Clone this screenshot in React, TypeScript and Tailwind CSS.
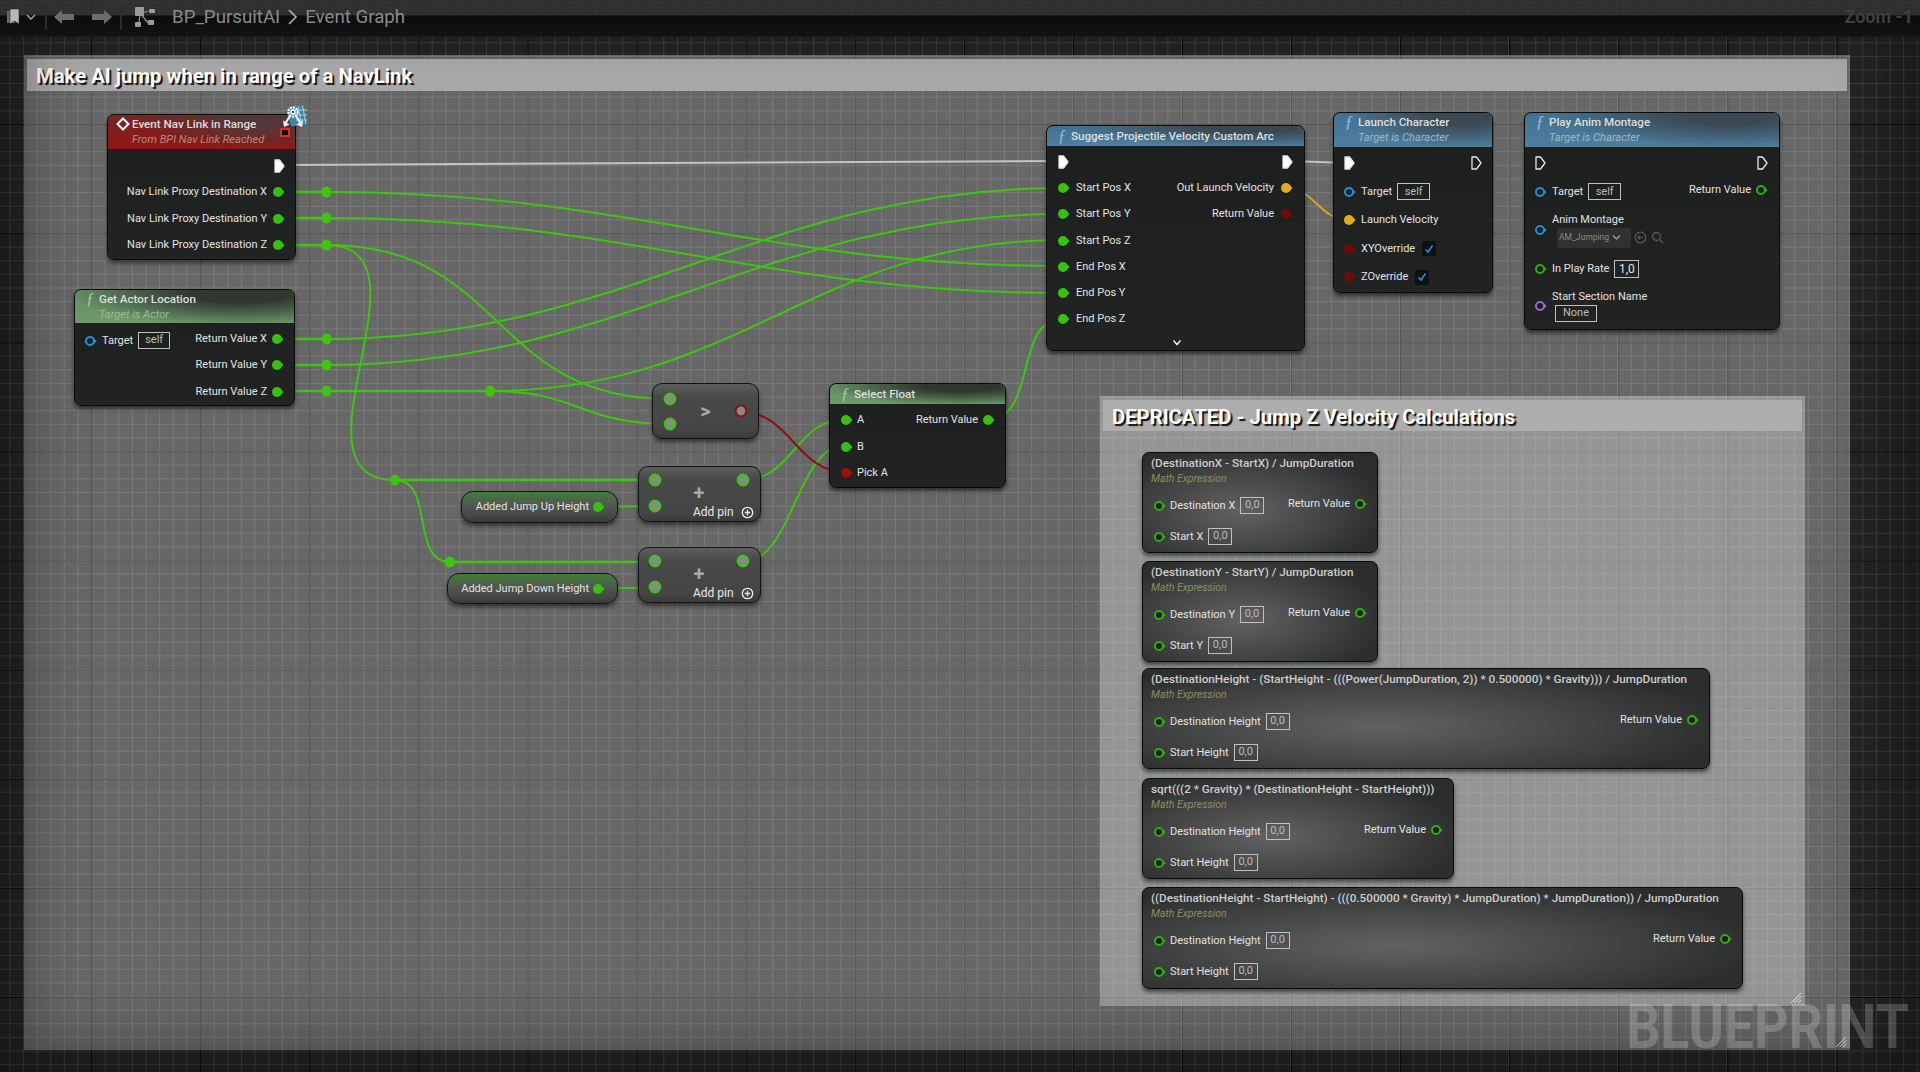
import type { ReactNode } from 'react';

const font = "font-['Roboto','Liberation_Sans',sans-serif]";

const GREEN = '#3fc411';
const wires: { d: [number, number, number, number, number]; c: string; w?: number }[] = [
  { d: [283, 192, 326.5, 192, 0], c: GREEN, w: 2.4 },
  { d: [283, 218, 326.5, 218, 0], c: GREEN, w: 2.4 },
  { d: [283, 245, 326.5, 245, 0], c: GREEN, w: 2.4 },
  { d: [326.5, 192, 1063, 266, 300], c: GREEN },
  { d: [326.5, 218, 1063, 293, 300], c: GREEN },
  { d: [326.5, 245, 669, 399, 180], c: GREEN },
  { d: [326.5, 245, 395, 480, 115], c: GREEN },
  { d: [395, 480, 655, 480, 0], c: GREEN, w: 2.4 },
  { d: [395, 480, 450, 562, 40], c: GREEN },
  { d: [450, 562, 655, 562, 0], c: GREEN, w: 2.4 },
  { d: [283, 339, 326.5, 339, 0], c: GREEN, w: 2.4 },
  { d: [283, 365, 326.5, 365, 0], c: GREEN, w: 2.4 },
  { d: [283, 391, 490, 391, 0], c: GREEN, w: 2.4 },
  { d: [326.5, 339, 1063, 188, 300], c: GREEN },
  { d: [326.5, 365, 1063, 214, 300], c: GREEN },
  { d: [490, 391, 1063, 240, 250], c: GREEN },
  { d: [490, 391, 669, 424, 90], c: GREEN },
  { d: [597, 507, 655, 506, 0], c: GREEN },
  { d: [597, 588, 655, 588, 0], c: GREEN },
  { d: [743, 480, 846, 419, 50], c: GREEN },
  { d: [743, 562, 846, 445, 50], c: GREEN },
  { d: [988, 419, 1063, 319, 50], c: GREEN },
  { d: [741, 412, 846, 472, 50], c: '#8a1212' },
  { d: [1285, 188, 1349, 220, 30], c: '#d9a61c' },
  { d: [285, 165, 1063, 161, 0], c: '#c4c4c4' },
  { d: [1288, 161, 1349, 163, 0], c: '#c4c4c4' },
];

const knots = [
  [326.5, 192], [326.5, 218], [326.5, 245], [326.5, 339], [326.5, 365], [326.5, 391],
  [490, 391], [395, 480], [450, 562],
];

function wirePath([x1, y1, x2, y2, t]: [number, number, number, number, number]) {
  return `M${x1} ${y1}C${x1 + t} ${y1} ${x2 - t} ${y2} ${x2} ${y2}`;
}

function Pin({ color, hollow }: { color: string; hollow?: boolean }) {
  return (
    <svg width="13" height="12" viewBox="0 0 13 12" className="shrink-0">
      <path d="M10 3.6 12.6 6 10 8.4z" fill={color} />
      <circle cx="6" cy="6" r={hollow ? 4 : 5} fill={hollow ? '#1d1f1e' : color} stroke={color} strokeWidth={hollow ? 2 : 0} />
    </svg>
  );
}

function GrayPin({ color }: { color: string }) {
  return (
    <svg width="14" height="14" viewBox="0 0 14 14" className="shrink-0">
      <circle cx="7" cy="7" r="5.4" fill="#8a8a8a" stroke={color} strokeWidth="2" />
    </svg>
  );
}

function ExecPin({ hollow }: { hollow?: boolean }) {
  return (
    <svg width="11" height="14" viewBox="0 0 11 14" className="shrink-0">
      <path
        d="M1 1h4.5L10 7l-4.5 6H1z"
        fill={hollow ? 'none' : '#fff'}
        stroke="#e8e8e8"
        strokeWidth="1.3"
        strokeLinejoin="round"
      />
    </svg>
  );
}

function Fn({ color }: { color: string }) {
  return (
    <span className={`w-[14px] text-center font-['Liberation_Serif',serif] text-[16px] italic leading-[14px] ${color}`}>ƒ</span>
  );
}

function Box({ children, className = '' }: { children: ReactNode; className?: string }) {
  return (
    <span className={`flex h-[17px] items-center justify-center border border-[#c0c0c0] text-[11px] text-[#bcbcbc] ${className}`}>
      {children}
    </span>
  );
}

function Check() {
  return (
    <span className="ml-[2px] flex h-[15px] w-[14px] items-center justify-center rounded-[2px] bg-[#0e0f0f]">
      <svg width="10" height="10" viewBox="0 0 10 10">
        <path d="M1.5 5.5 4 8 8.5 1.5" fill="none" stroke="#2a8cff" strokeWidth="1.5" />
      </svg>
    </span>
  );
}

function Label({ children, className = '' }: { children: ReactNode; className?: string }) {
  return <span className={`whitespace-nowrap text-[11px] leading-[14px] text-[#e2e2e2] ${className}`}>{children}</span>;
}

function NodeBox({ className, children }: { className: string; children: ReactNode }) {
  return (
    <div className={`absolute flex flex-col overflow-hidden rounded-[7px] border border-[#0b0b0b] shadow-[0_3px_4px_rgba(0,0,0,0.55)] ${className}`}>
      {children}
    </div>
  );
}

function Header({ title, sub, icon, bg, h, subColor }: { title: string; sub?: string; icon: ReactNode; bg: string; h: string; subColor?: string }) {
  return (
    <div className={`flex shrink-0 flex-col ${sub ? 'pt-[2px]' : 'pt-[3px]'} ${bg} ${h}`}>
      <div className="flex items-center gap-[2px] pl-[8px]">
        {icon}
        <span className="whitespace-nowrap text-[11.6px] font-medium leading-[14px] text-[#dedede]">{title}</span>
      </div>
      {sub && <span className={`mt-[2px] pl-[24px] text-[11.1px] italic leading-[14px] ${subColor}`}>{sub}</span>}
    </div>
  );
}

const greenHead = "bg-[radial-gradient(ellipse_110%_140%_at_75%_10%,#2f382f_20%,transparent_70%),linear-gradient(#668c66,#6d9a6d)]";
const blueHead = "bg-[radial-gradient(ellipse_90%_130%_at_80%_5%,#3a4853_20%,transparent_75%),linear-gradient(#44708f,#4d7f9f)]";
const redHead = "bg-[radial-gradient(ellipse_90%_130%_at_85%_5%,#503838_20%,transparent_75%),linear-gradient(#7a2424,#8f1515)]";
const dark = "bg-[linear-gradient(#1d1f1e,#222423)]";

function MathNode({ className, title, a, b }: { className: string; title: string; a: string; b: string }) {
  return (
    <NodeBox className={`left-[1142px] bg-[radial-gradient(ellipse_65%_70%_at_42%_58%,#626262,#2c2e2d_95%)] ${className}`}>
      <div className="flex h-[37px] shrink-0 flex-col pl-[8px] pt-[3px]">
        <span className="whitespace-nowrap text-[11.72px] font-medium leading-[14px] text-[#cdcdcd]">{title}</span>
        <span className="mt-[2px] text-[10.5px] italic leading-[14px] text-[#8d8d66]">Math Expression</span>
      </div>
      <div className="flex justify-between">
        <div className="flex flex-col pl-[10px]">
          <div className="flex h-[31px] items-center gap-[4px]">
            <Pin color="#2fae0c" hollow />
            <Label>{a}</Label>
            <Box className="ml-[1px] w-[24px] border-[#a8a8a8]">0,0</Box>
          </div>
          <div className="flex h-[31px] items-center gap-[4px]">
            <Pin color="#2fae0c" hollow />
            <Label>{b}</Label>
            <Box className="ml-[1px] w-[24px] border-[#a8a8a8]">0,0</Box>
          </div>
        </div>
        <div className="flex h-[27px] items-center gap-[4px] pr-[10px]">
          <Label>Return Value</Label>
          <Pin color="#2fae0c" hollow />
        </div>
      </div>
    </NodeBox>
  );
}

function PureNode({ className, children }: { className: string; children: ReactNode }) {
  return (
    <div className={`absolute rounded-[10px] border border-[#141414] bg-[linear-gradient(#5e5e5e,#494949_22%,#454545_85%,#3a3a3a)] shadow-[0_3px_4px_rgba(0,0,0,0.5)] ${className}`}>
      {children}
    </div>
  );
}

function VarNode({ className, label }: { className: string; label: string }) {
  return (
    <div className={`absolute flex items-center justify-end gap-[3px] rounded-[12px] border border-[#141414] bg-[linear-gradient(#3f7f35,#525a50_38%,#454745_80%,#383838)] pr-[12px] shadow-[0_3px_4px_rgba(0,0,0,0.5)] ${className}`}>
      <Label className="text-[10.5px]">{label}</Label>
      <Pin color="#35c10e" />
    </div>
  );
}

function Grip() {
  return (
    <svg width="12" height="12" viewBox="0 0 12 12" className="absolute bottom-[2px] right-[3px]">
      <path d="M1 11 11 1M4.5 11 11 4.5M8 11l3-3" stroke="#e4e4e4" strokeWidth="1" />
    </svg>
  );
}

function TopBar() {
  return (
    <div className="absolute inset-x-0 top-0 flex h-[37px] items-center bg-[linear-gradient(rgba(55,55,55,0.75)_0,rgba(55,55,55,0.75)_15px,#0c0c0c_16px,#121212_35px,rgba(18,18,18,0.5)_37px)] pb-[3px]">
      <svg width="20" height="18" viewBox="0 0 20 18" className="ml-[6px]">
        <path d="M1 3h8v12H1z" fill="#6a6a6a" />
        <path d="M4 1h9v15l-4.5-3L4 16z" fill="#b8b8b8" stroke="#2a2a2a" strokeWidth="0.6" />
      </svg>
      <svg width="12" height="10" viewBox="0 0 12 10" className="ml-[-1px]">
        <path d="M2 3l4 4 4-4" fill="none" stroke="#a8a8a8" strokeWidth="1.4" />
      </svg>
      <span className="ml-[8px] h-[26px] w-[2px] bg-[#2c2c2c]" />
      <svg width="20" height="16" viewBox="0 0 20 16" className="ml-[7px]">
        <path d="M0 8l8-7v4h12v6H8v4z" fill="#6c6c6c" />
      </svg>
      <svg width="20" height="16" viewBox="0 0 20 16" className="ml-[18px]">
        <path d="M20 8l-8-7v4H0v6h12v4z" fill="#6c6c6c" />
      </svg>
      <span className="ml-[8px] h-[26px] w-[2px] bg-[#2c2c2c]" />
      <svg width="24" height="22" viewBox="0 0 24 22" className="ml-[12px]">
        <path d="M7 7l7-2M7 8l7 9M6 8l-1 9" stroke="#8e8e8e" strokeWidth="1.3" fill="none" />
        <rect x="1" y="1" width="9" height="9" rx="1" fill="#9c9c9c" />
        <rect x="15" y="3" width="6" height="4" rx="1" fill="#9c9c9c" />
        <rect x="14" y="14" width="6" height="5" rx="1" fill="#9c9c9c" />
        <rect x="1" y="16" width="6" height="5" rx="1" fill="#9c9c9c" />
      </svg>
      <span className="ml-[14px] text-[18.7px] leading-none text-[#8a8a8a]">BP_PursuitAI</span>
      <svg width="12" height="18" viewBox="0 0 12 18" className="ml-[6px]">
        <path d="M3 2l7 7-7 7" fill="none" stroke="#b0b0b0" strokeWidth="1.6" />
      </svg>
      <span className="ml-[7px] text-[18.7px] leading-none text-[#8a8a8a]">Event Graph</span>
      <span className="ml-auto mr-[7px] text-[18px] font-bold leading-none text-[#3f3f3f]">Zoom -1</span>
    </div>
  );
}

export default function App() {
  return (
    <div className={`relative h-[1072px] w-[1920px] overflow-hidden bg-[#242424] ${font}`}>
      {/* grid */}
      <div className="absolute inset-0 blur-[0.4px] [background-image:linear-gradient(90deg,#0a0a0a_1px,transparent_1px),linear-gradient(#0a0a0a_1px,transparent_1px),linear-gradient(90deg,#3f3f3f_1px,transparent_1px),linear-gradient(#3f3f3f_1px,transparent_1px)] [background-size:109.1px_109.1px,109.1px_109.1px,13.64px_13.64px,13.64px_13.64px] [background-position:91px_15px,91px_15px,9.3px_1.4px,9.3px_1.4px]" />

      {/* big comment */}
      <div className="absolute left-[24px] top-[55px] h-[995px] w-[1826px] bg-white/[0.31]">
        <div className="mx-[3px] mt-[4px] flex h-[32px] items-center bg-[#aaaaaa] pl-[9px] pt-[3px] text-[20.3px] font-bold text-white [text-shadow:2px_2px_1px_#111]">
          Make AI jump when in range of a NavLink
        </div>
        <Grip />
      </div>

      {/* depricated comment */}
      <div className="absolute left-[1100px] top-[396px] h-[610px] w-[705px] bg-white/[0.3]">
        <div className="mx-[3px] mt-[4px] flex h-[31px] items-center bg-[#adadad] pl-[9px] pt-[3px] text-[20.3px] font-bold text-white [text-shadow:2px_2px_1px_#111]">
          DEPRICATED - Jump Z Velocity Calculations
        </div>
        <Grip />
      </div>

      {/* canvas vignette */}
      <div className="absolute inset-0 shadow-[inset_0_0_70px_14px_rgba(0,0,0,0.42)]" />
      <TopBar />

      <svg width="1920" height="1072" className="absolute left-0 top-0">
        {wires.map((w, i) => (
          <path key={i} d={wirePath(w.d)} fill="none" stroke={w.c} strokeWidth={w.w ?? 2} />
        ))}
        {knots.map(([x, y]) => (
          <ellipse key={`${x}-${y}`} cx={x} cy={y} rx="5" ry="5.5" fill="#3fc411" />
        ))}
      </svg>

      {/* Event Nav Link in Range */}
      <NodeBox className={`left-[107px] top-[114px] h-[146px] w-[189px] ${dark}`}>
        <Header
          title="Event Nav Link in Range"
          sub="From BPI Nav Link Reached"
          bg={redHead}
          h="h-[34px]"
          subColor="text-[#b08f78]"
          icon={
            <svg width="14" height="14" viewBox="0 0 14 14">
              <path d="M7 1.5 12.5 7 7 12.5 1.5 7z" fill="none" stroke="#fff" strokeWidth="2" />
            </svg>
          }
        />
        <div className="flex flex-col items-end pr-[10px] pt-[4px]">
          <div className="flex h-[26.3px] items-center"><ExecPin /></div>
          {['X', 'Y', 'Z'].map(a => (
            <div key={a} className="flex h-[26.3px] items-center gap-[5px]">
              <Label>Nav Link Proxy Destination {a}</Label>
              <Pin color="#35c10e" />
            </div>
          ))}
        </div>
      </NodeBox>
      <svg width="26" height="24" viewBox="0 0 26 24" className="absolute left-[282px] top-[104px]">
        <path d="M4 4 21 1l4 19-7 2H9z" fill="#3c86aa" />
        <path d="M16 2.5 20 21M20.5 1.5 24 20M11 6l14 0M12 11h13M14 16h11" stroke="#a9dcea" strokeWidth="0.9" />
        <circle cx="11" cy="8" r="4.6" fill="none" stroke="#fff" strokeWidth="2.2" strokeDasharray="2 1" />
        <circle cx="11" cy="8" r="2.8" fill="#fff" />
        <circle cx="11" cy="8" r="1.3" fill="#2c5f78" />
        <path d="M8 12 3.5 19M14 12l4.5 7" stroke="#f2f2f2" strokeWidth="2.2" fill="none" />
        <path d="M1 16.5 2 23l5.5-2.5zM21 16.5 20 23l-5.5-2.5z" fill="#f2f2f2" />
      </svg>
      <span className="absolute left-[280px] top-[128px] h-[9px] w-[10px] border-2 border-[#e12a2a] bg-black" />

      {/* Get Actor Location */}
      <NodeBox className={`left-[74px] top-[289px] h-[117px] w-[221px] ${dark}`}>
        <Header
          title="Get Actor Location"
          sub="Target is Actor"
          bg={greenHead}
          h="h-[33px]"
          subColor="text-[#9db88f]"
          icon={<Fn color="text-[#9fd08f]" />}
        />
        <div className="flex justify-between">
          <div className="flex h-[26px] items-center gap-[5px] pl-[9px] pt-[9px]">
            <Pin color="#1f8fd8" hollow />
            <Label>Target</Label>
            <Box className="w-[32px]">self</Box>
          </div>
          <div className="flex flex-col items-end pr-[10px] pt-[3px]">
            {['X', 'Y', 'Z'].map(a => (
              <div key={a} className="flex h-[26.3px] items-center gap-[4px]">
                <Label>Return Value {a}</Label>
                <Pin color="#35c10e" />
              </div>
            ))}
          </div>
        </div>
      </NodeBox>

      {/* Suggest Projectile Velocity Custom Arc */}
      <NodeBox className={`left-[1046px] top-[125px] h-[226px] w-[259px] ${dark}`}>
        <Header title="Suggest Projectile Velocity Custom Arc" bg={blueHead} h="h-[20px]" icon={<Fn color="text-[#8fc4e6]" />} />
        <div className="flex justify-between pl-[10px] pr-[11px] pt-[3px]">
          <div className="flex flex-col">
            <div className="flex h-[26.2px] items-center pl-[1px]"><ExecPin /></div>
            {['Start Pos X', 'Start Pos Y', 'Start Pos Z', 'End Pos X', 'End Pos Y', 'End Pos Z'].map(l => (
              <div key={l} className="flex h-[26.2px] items-center gap-[6px]">
                <Pin color="#35c10e" />
                <Label>{l}</Label>
              </div>
            ))}
          </div>
          <div className="flex flex-col items-end">
            <div className="flex h-[26.2px] items-center"><ExecPin /></div>
            <div className="flex h-[26.2px] items-center gap-[6px]">
              <Label>Out Launch Velocity</Label>
              <Pin color="#e8aa1a" />
            </div>
            <div className="flex h-[26.2px] items-center gap-[6px]">
              <Label>Return Value</Label>
              <Pin color="#6e0b0b" />
            </div>
          </div>
        </div>
        <svg width="10" height="8" viewBox="0 0 10 8" className="ml-[125px] mt-[7px]">
          <path d="M1.5 1.5 5 5.5l3.5-4" fill="none" stroke="#e8e8e8" strokeWidth="1.6" />
        </svg>
      </NodeBox>

      {/* Launch Character */}
      <NodeBox className={`left-[1333px] top-[112px] h-[181px] w-[160px] ${dark}`}>
        <Header title="Launch Character" sub="Target is Character" bg={blueHead} h="h-[34px]" subColor="text-[#9db6c6]" icon={<Fn color="text-[#8fc4e6]" />} />
        <div className="flex flex-col pl-[9px] pr-[10px] pt-[2px]">
          <div className="flex h-[28.5px] items-center justify-between pl-[1px]"><ExecPin /><ExecPin hollow /></div>
          <div className="flex h-[28.5px] items-center gap-[5px]">
            <Pin color="#1f8fd8" hollow />
            <Label>Target</Label>
            <Box className="w-[33px]">self</Box>
          </div>
          <div className="flex h-[28.5px] items-center gap-[5px]">
            <Pin color="#e8aa1a" />
            <Label>Launch Velocity</Label>
          </div>
          <div className="flex h-[28.5px] items-center gap-[5px]">
            <Pin color="#6e0b0b" />
            <Label>XYOverride</Label>
            <Check />
          </div>
          <div className="flex h-[28.5px] items-center gap-[5px]">
            <Pin color="#6e0b0b" />
            <Label>ZOverride</Label>
            <Check />
          </div>
        </div>
      </NodeBox>

      {/* Play Anim Montage */}
      <NodeBox className={`left-[1524px] top-[112px] h-[218px] w-[256px] ${dark}`}>
        <Header title="Play Anim Montage" sub="Target is Character" bg={blueHead} h="h-[34px]" subColor="text-[#9db6c6]" icon={<Fn color="text-[#8fc4e6]" />} />
        <div className="flex flex-col pl-[9px] pr-[11px] pt-[2px]">
          <div className="flex h-[28.5px] items-center justify-between pl-[1px]"><ExecPin hollow /><ExecPin hollow /></div>
          <div className="flex h-[28.5px] items-center justify-between">
            <div className="flex items-center gap-[5px]">
              <Pin color="#1f8fd8" hollow />
              <Label>Target</Label>
              <Box className="w-[33px]">self</Box>
            </div>
            <div className="flex items-center gap-[4px] pb-[4px]">
              <Label>Return Value</Label>
              <Pin color="#2fae0c" hollow />
            </div>
          </div>
          <div className="flex h-[48px] items-center gap-[5px]">
            <Pin color="#1f8fd8" hollow />
            <div className="flex flex-col">
              <Label>Anim Montage</Label>
              <div className="flex items-center">
                <div className="ml-[5px] mt-[1px] flex h-[20px] w-[74px] items-center gap-[3px] rounded-[2px] bg-[#303231] pl-[2px]">
                  <span className="text-[8.5px] text-[#8a8a8a]">AM_Jumping</span>
                  <svg width="9" height="7" viewBox="0 0 9 7"><path d="M1 1.5 4.5 5 8 1.5" fill="none" stroke="#a8a8a8" strokeWidth="1.2" /></svg>
                </div>
                <svg width="13" height="13" viewBox="0 0 13 13" className="ml-[3px]">
                  <circle cx="6.5" cy="6.5" r="5.3" fill="none" stroke="#555" strokeWidth="1.2" />
                  <path d="M9 6.5H4.5M6 4.5l-2 2 2 2" fill="none" stroke="#555" strokeWidth="1.1" />
                </svg>
                <svg width="13" height="13" viewBox="0 0 13 13" className="ml-[4px]">
                  <circle cx="5.5" cy="5.5" r="4" fill="none" stroke="#555" strokeWidth="1.3" />
                  <path d="M8.5 8.5 12 12" stroke="#555" strokeWidth="1.4" />
                </svg>
              </div>
            </div>
          </div>
          <div className="flex h-[30px] items-center gap-[5px]">
            <Pin color="#2fae0c" hollow />
            <Label>In Play Rate</Label>
            <Box className="h-[18px] w-[25px] text-[12px] text-[#e4e4e4]">1,0</Box>
          </div>
          <div className="flex h-[44px] items-center gap-[5px]">
            <Pin color="#a560d8" hollow />
            <div className="flex flex-col pb-[1px]">
              <Label>Start Section Name</Label>
              <Box className="ml-[3px] mt-[1px] w-[42px]">None</Box>
            </div>
          </div>
        </div>
      </NodeBox>

      {/* compare */}
      <PureNode className="left-[652px] top-[383px] flex h-[56px] w-[107px] items-center justify-between pl-[10px] pr-[10px]">
        <div className="flex flex-col gap-[11px]">
          <GrayPin color="#39c411" />
          <GrayPin color="#39c411" />
        </div>
        <span className="text-[20px] font-bold leading-none text-[#a8a8a8]">&gt;</span>
        <GrayPin color="#8a1212" />
      </PureNode>

      {/* add nodes */}
      {['top-[466px]', 'top-[547px]'].map(t => (
        <PureNode key={t} className={`left-[638px] h-[56px] w-[123px] ${t}`}>
          <div className="flex pl-[9px] pt-[6px]">
            <div className="flex flex-col gap-[12px]">
              <GrayPin color="#39c411" />
              <GrayPin color="#39c411" />
            </div>
            <div className="flex flex-1 flex-col items-start">
              <div className="self-end pr-[10px]"><GrayPin color="#39c411" /></div>
              <span className="ml-[31px] mt-[-1px] w-[12px] text-center text-[20px] font-bold leading-[14px] text-[#a8a8a8]">+</span>
              <div className="ml-[31px] mt-[5px] flex items-center gap-[7px] whitespace-nowrap">
                <span className="text-[12px] leading-[14px] text-[#e8e8e8]">Add pin</span>
                <svg width="13" height="13" viewBox="0 0 13 13">
                  <circle cx="6.5" cy="6.5" r="5.2" fill="none" stroke="#eee" strokeWidth="1.3" />
                  <path d="M6.5 3.8v5.4M3.8 6.5h5.4" stroke="#eee" strokeWidth="1.3" />
                </svg>
              </div>
            </div>
          </div>
        </PureNode>
      ))}

      <VarNode className="left-[461px] top-[491px] h-[32px] w-[157px]" label="Added Jump Up Height" />
      <VarNode className="left-[447px] top-[573px] h-[31px] w-[171px]" label="Added Jump Down Height" />

      {/* Select Float */}
      <NodeBox className={`left-[829px] top-[383px] h-[105px] w-[177px] ${dark}`}>
        <Header title="Select Float" bg={greenHead} h="h-[20px]" icon={<Fn color="text-[#9fd08f]" />} />
        <div className="flex justify-between pl-[10px] pr-[10px] pt-[3px]">
          <div className="flex flex-col">
            {['A', 'B', 'Pick A'].map((l, i) => (
              <div key={l} className="flex h-[26.5px] items-center gap-[4px]">
                <Pin color={i === 2 ? '#9a0f0f' : '#35c10e'} />
                <Label>{l}</Label>
              </div>
            ))}
          </div>
          <div className="flex h-[26.5px] items-center gap-[4px]">
            <Label>Return Value</Label>
            <Pin color="#35c10e" />
          </div>
        </div>
      </NodeBox>

      {/* math nodes */}
      <MathNode className="top-[452px] h-[101px] w-[236px]" title="(DestinationX - StartX) / JumpDuration" a="Destination X" b="Start X" />
      <MathNode className="top-[561px] h-[101px] w-[236px]" title="(DestinationY - StartY) / JumpDuration" a="Destination Y" b="Start Y" />
      <MathNode className="top-[668px] h-[101px] w-[568px]" title="(DestinationHeight - (StartHeight - (((Power(JumpDuration, 2)) * 0.500000) * Gravity))) / JumpDuration" a="Destination Height" b="Start Height" />
      <MathNode className="top-[778px] h-[101px] w-[312px]" title="sqrt(((2 * Gravity) * (DestinationHeight - StartHeight)))" a="Destination Height" b="Start Height" />
      <MathNode className="top-[887px] h-[102px] w-[601px]" title="((DestinationHeight - StartHeight) - (((0.500000 * Gravity) * JumpDuration) * JumpDuration)) / JumpDuration" a="Destination Height" b="Start Height" />

      {/* watermark */}
      <span className="absolute bottom-[20px] right-[11px] origin-right scale-x-[0.865] whitespace-nowrap text-[62px] font-bold leading-[50px] text-white/20">BLUEPRINT</span>
    </div>
  );
}
